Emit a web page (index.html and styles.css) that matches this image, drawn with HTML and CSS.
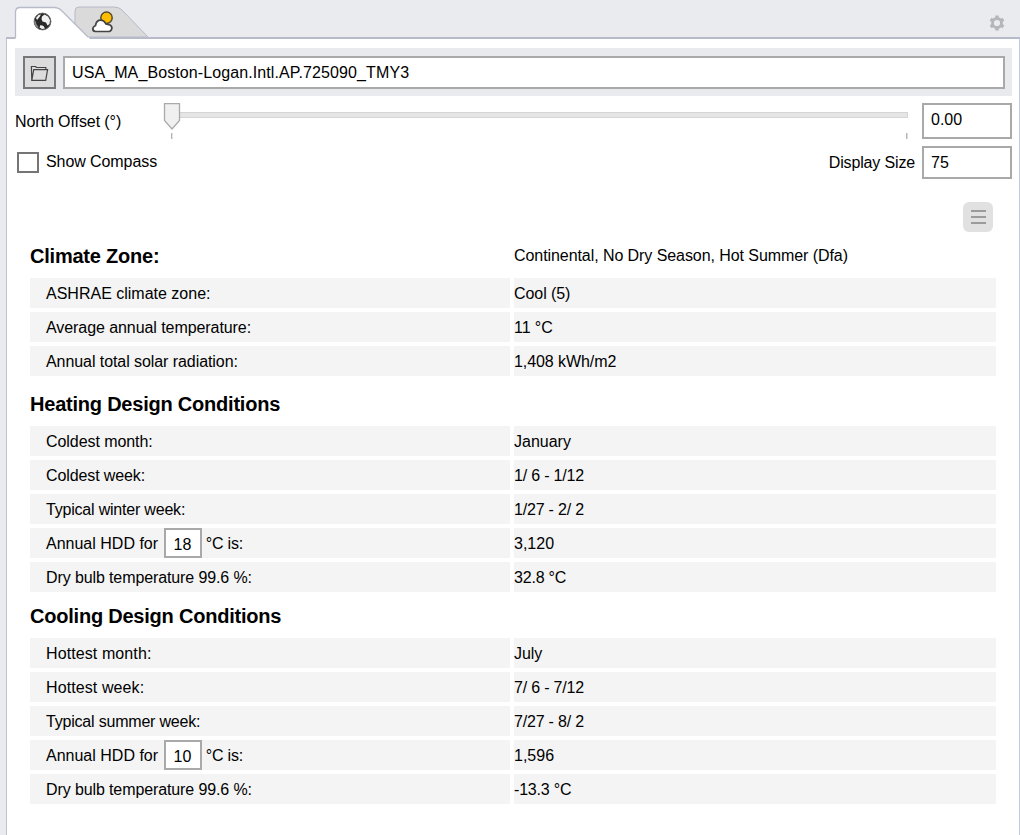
FILE: index.html
```
<!DOCTYPE html>
<html lang="en">
<head>
<meta charset="utf-8">
<title>Climate</title>
<link rel="stylesheet" href="styles.css">
</head>
<body>
<div class="window">
  <header class="tabbar">
    <svg class="tabs" width="170" height="39" viewBox="0 0 170 39">
      <path d="M75 37V11Q75 7 79 7H114Q119 7 122 10L148 37Z" fill="#dadada" stroke="#b7bac8"/>
      <path d="M15.500 39V12Q15.500 7.500 20 7.500H54Q58.500 7.500 62 11L88 37L90 39Z" fill="#fff"/>
      <path d="M15.500 38V12Q15.500 7.500 20 7.500H54Q58.500 7.500 62 11L88 37" fill="none" stroke="#b7bac8" stroke-width="1.300"/>
      <circle cx="42.500" cy="21.500" r="8.400" fill="#292929" stroke="#666" stroke-width="1"/>
      <path d="M42 16.500L44.500 14.500L48 16.500L50 20L49.500 24L47.500 25.500L46 22.500L42.500 21.500L41.500 19ZM36 18L38.500 15L41 14.500L39.500 17L37 20ZM40.500 25L43.500 26L45 28.500L42 29L39.500 27.500Z" fill="#f1f1f1"/>
      <path d="M35 21Q35 25 38 27.500" fill="none" stroke="#858585" stroke-width="1.500"/>
      <circle cx="106.500" cy="17.700" r="5.700" fill="#fdbd00" stroke="#554b30" stroke-width="1.500"/>
      <path d="M95.500 31.500Q92.500 31 92.800 28.500Q93.300 26.500 95.500 25.500Q96.500 20.200 100.500 20.200Q104 20.200 106 24L110 25Q112.500 26.500 111.700 29Q111 31.500 108.500 31.500Z" fill="#fff" stroke="#444" stroke-width="1.700"/>
    </svg>
    <svg class="gear" width="18" height="18" viewBox="0 0 18 18">
      <g fill="none" stroke="#b5b6ba"><circle cx="9" cy="9" r="4.500" stroke-width="2.800"/>
      <path d="M9 1.500V4M9 14V16.500M2.500 5.250L4.700 6.500M13.300 11.500L15.500 12.750M2.500 12.750L4.700 11.500M13.300 6.500L15.500 5.250" stroke-width="3.400"/></g>
    </svg>
  </header>
  <main class="panel">
    <div class="filebar">
      <button class="open" aria-label="Open">
        <svg width="20" height="20" viewBox="0 0 20 20" fill="none" stroke="#444" stroke-width="1.200"><path d="M2.800 17.300L2.400 3.500H6.500L7.500 4.500H16.800V6.600M2.800 17.300L4.700 6.600H18.600L16.700 17.300Z"/></svg>
      </button>
      <div class="field path">USA_MA_Boston-Logan.Intl.AP.725090_TMY3</div>
    </div>
    <div class="row north">
      <span class="label">North Offset (°)</span>
      <svg class="slider" width="748" height="38" viewBox="0 0 748 38">
        <rect x="10.500" y="9.500" width="735" height="5" fill="#e5e5e5" stroke="#d5d5d5"/>
        <path d="M2.500 .7H17.500V17.500L10 26L2.500 17.500Z" fill="#f0f0f0" stroke="#aaa" stroke-width="1.300"/>
        <path d="M9.700 30V36M744.800 30V36" stroke="#b0b0b0" stroke-width="1.300"/>
      </svg>
      <div class="field offset">0.00</div>
    </div>
    <div class="row display">
      <span class="check"></span><span class="check-label">Show Compass</span>
      <span class="size-label">Display Size</span><div class="field size">75</div>
    </div>
    <div class="tools"><button class="menu" aria-label="Menu"><i></i><i></i><i></i></button></div>
    <section class="group first">
      <div class="head"><h2>Climate Zone:</h2><span>Continental, No Dry Season, Hot Summer (Dfa)</span></div>
      <div class="item"><div class="normal">ASHRAE climate zone:</div><div>Cool (5)</div></div>
      <div class="item"><div>Average annual temperature:</div><div>11 °C</div></div>
      <div class="item"><div>Annual total solar radiation:</div><div>1,408 kWh/m2</div></div>
    </section>
    <section class="group second">
      <div class="head"><h2>Heating Design Conditions</h2></div>
      <div class="item"><div>Coldest month:</div><div class="normal">January</div></div>
      <div class="item"><div class="snug">Coldest week:</div><div class="tight">1/ 6 - 1/12</div></div>
      <div class="item"><div class="tight">Typical winter week:</div><div class="tight">1/27 - 2/ 2</div></div>
      <div class="item"><div class="normal">Annual HDD for <b class="degree">18</b><span class="tight"> °C is:</span></div><div class="normal">3,120</div></div>
      <div class="item"><div class="snug">Dry bulb temperature 99.6 %:</div><div class="tight">32.8 °C</div></div>
    </section>
    <section class="group third">
      <div class="head"><h2>Cooling Design Conditions</h2></div>
      <div class="item"><div class="loose">Hottest month:</div><div>July</div></div>
      <div class="item"><div class="loose">Hottest week:</div><div class="tight">7/ 6 - 7/12</div></div>
      <div class="item"><div class="tight">Typical summer week:</div><div class="tight">7/27 - 8/ 2</div></div>
      <div class="item"><div class="normal">Annual HDD for <b class="degree">10</b><span class="tight"> °C is:</span></div><div class="normal">1,596</div></div>
      <div class="item"><div class="snug">Dry bulb temperature 99.6 %:</div><div class="tight">-13.3 °C</div></div>
    </section>
  </main>
</div>
</body>
</html>
```
FILE: styles.css
```
* { box-sizing: border-box; }
body { margin: 0; background: #eaebef; font: 16px/20px "Liberation Sans", Arial, sans-serif; color: #000; overflow: hidden; }
.window { height: 835px; display: flex; flex-direction: column; }
.tabbar { height: 39px; flex: none; display: flex; justify-content: space-between; background: linear-gradient(#b7bac8, #b7bac8) 6px 37px / 1014px 2px no-repeat; }
.tabs { display: block; }
.gear { margin: 14px 14px 0 0; }
.panel { flex: 1; margin-left: 6px; border-left: 1px solid #bfc3cf; border-right: 1px solid #bccbe0; background: #fff; padding: 9px 7px 0 8px; }
.filebar { height: 48px; background: #e9eaee; padding: 8px 7px 7px 8px; display: flex; gap: 7px; }
.open { width: 33px; height: 33px; border: 2px solid #77777a; background: #dcdcdc; padding: 4px; }
.open svg { display: block; }
.field { border: 2px solid #a9a9a9; background: #fff; padding-left: 7px; white-space: nowrap; }
.path { flex: 1; height: 33px; line-height: 30px; letter-spacing: .1px; }
.row { display: flex; align-items: flex-start; white-space: nowrap; }
.north { height: 43px; padding-top: 7px; }
.label { width: 147px; padding-top: 9px; letter-spacing: -.08px; }
.slider { flex: none; margin-right: 12px; }
.offset { width: 90px; height: 36px; line-height: 30px; }
.display { height: 40px; padding-top: 7px; }
.check { width: 22px; height: 21px; border: 2px solid #757575; margin: 6px 7px 0 2px; }
.check-label { padding-top: 6px; letter-spacing: -.08px; }
.size-label { margin-left: auto; padding: 7px 7px 0 0; letter-spacing: -.15px; }
.size { width: 90px; height: 33px; line-height: 29px; }
.tools { display: flex; justify-content: flex-end; padding: 23px 19px 0 0; }
.menu { width: 30px; height: 30px; border: 0; border-radius: 6px; background: #e1e1e1; padding: 8px; display: flex; flex-direction: column; gap: 4px; }
.menu i { width: 15px; height: 2px; background: #9b9b9b; }
.group { margin: 0 16px 0 15px; display: grid; gap: 4px; }
.first { padding-top: 10px; }
.second { padding-top: 14px; }
.third { padding-top: 10px; }
.head, .item { display: grid; grid-template-columns: 480px 482px; gap: 4px; white-space: nowrap; letter-spacing: -.07px; }
.head { height: 32px; line-height: 28px; }
h2 { margin: 0; font-size: 20px; line-height: 28px; letter-spacing: -.22px; }
.item > div { height: 30px; line-height: 32px; background: #f4f4f4; }
.item > div:first-child { padding-left: 16px; display: flex; white-space: pre; }
.item .normal { letter-spacing: 0; }
.item .snug { letter-spacing: -.11px; }
.item .tight { letter-spacing: -.2px; }
.item .loose { letter-spacing: .1px; }
.degree { font-weight: 400; width: 38px; height: 30px; margin-left: 1px; border: 2px solid #a9a9a9; background: #fff; text-align: center; line-height: 29px; }
```
